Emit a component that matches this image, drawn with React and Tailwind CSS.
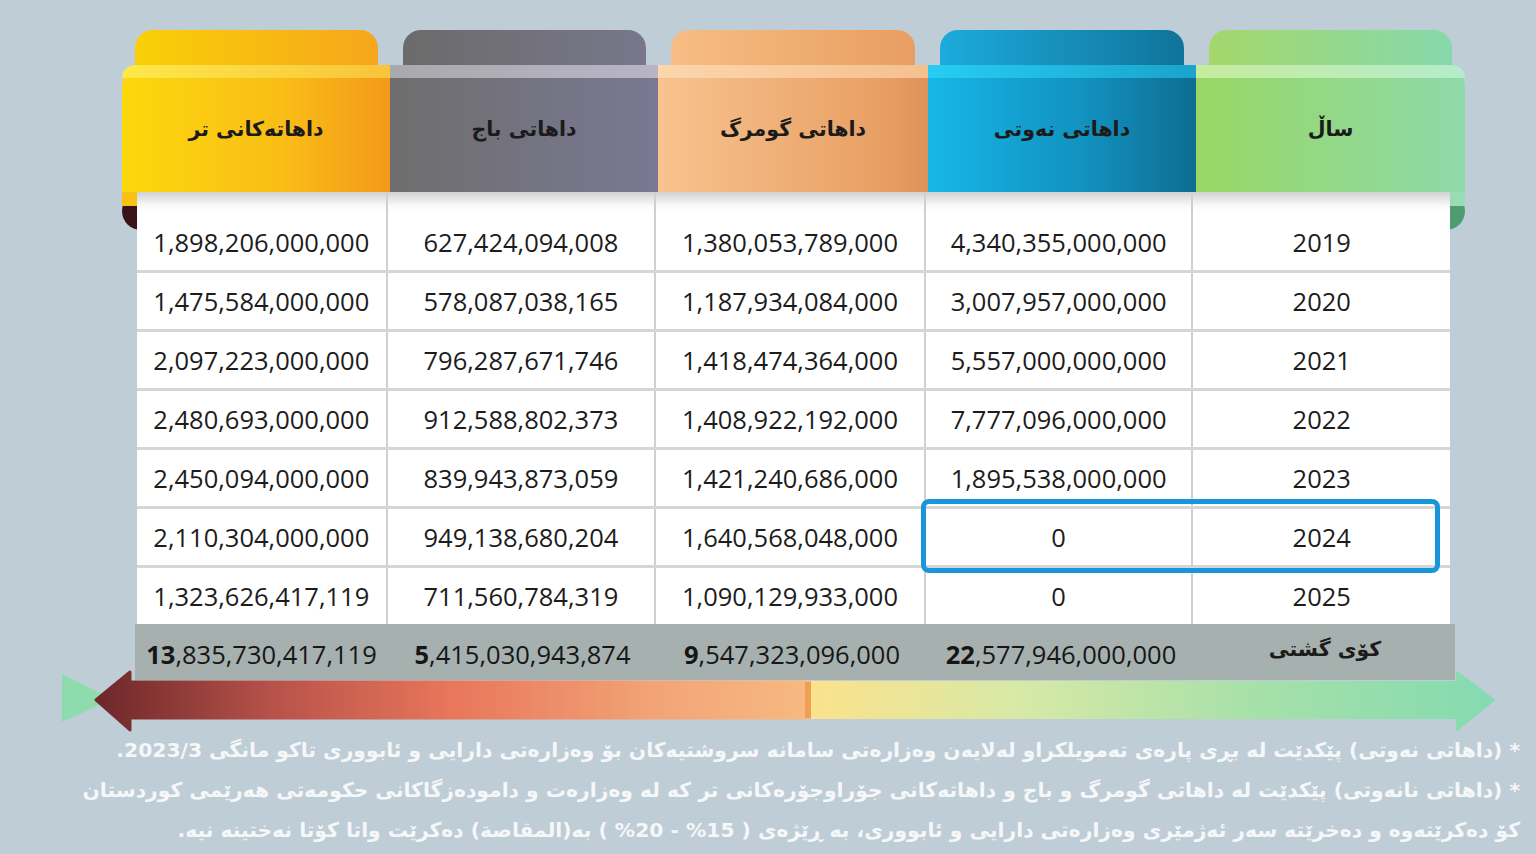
import React from "react";

const arabic = { fontFamily: '"DejaVu Sans", "Noto Sans", sans-serif' };
const nums = { fontFamily: '"Open Sans", "Noto Sans", sans-serif' };

// visual order, left to right
const tabs = [
  "w-[243px] bg-[linear-gradient(90deg,#f9d006,#f6a61d)]",
  "w-[243px] bg-[linear-gradient(90deg,#6b6b6b,#78778b)]",
  "w-[244px] bg-[linear-gradient(90deg,#f7bd85,#e89e60)]",
  "w-[244px] bg-[linear-gradient(90deg,#1cabdc,#10739a)]",
  "w-[243px] bg-[linear-gradient(90deg,#a4d76b,#86d9ab)]",
];

const heads = [
  {
    label: "داهاتەکانی تر",
    cls: "w-[268px] rounded-tl-[22px] bg-[linear-gradient(90deg,#fcd80c,#f9bd16_60%,#f49a1a)]",
    strip: "bg-[linear-gradient(90deg,#fde94a,#f9c43a)]",
  },
  {
    label: "داهاتی باج",
    cls: "w-[268px] bg-[linear-gradient(90deg,#6e6e6e,#7a7892)]",
    strip: "bg-[linear-gradient(90deg,#a9a9ad,#b7b5c6)]",
  },
  {
    label: "داهاتی گومرگ",
    cls: "w-[270px] bg-[linear-gradient(90deg,#f8c38f,#e89e63_85%,#df915a)]",
    strip: "bg-[linear-gradient(90deg,#fcd6ac,#f5c08f)]",
  },
  {
    label: "داهاتی نەوتی",
    cls: "w-[268px] bg-[linear-gradient(90deg,#16b7e8,#1290bd_60%,#0e6c92)]",
    strip: "bg-[linear-gradient(90deg,#27cdf2,#1aa3cc)]",
  },
  {
    label: "ساڵ",
    cls: "w-[269px] rounded-tr-[22px] bg-[linear-gradient(90deg,#98d764,#8ed9a9)]",
    strip: "bg-[linear-gradient(90deg,#c7ec9f,#b4eccb)]",
  },
];

const colW = ["w-[251px]", "w-[269px]", "w-[270px]", "w-[268px]", "w-[257px]"];

const rows = [
  ["1,898,206,000,000", "627,424,094,008", "1,380,053,789,000", "4,340,355,000,000", "2019"],
  ["1,475,584,000,000", "578,087,038,165", "1,187,934,084,000", "3,007,957,000,000", "2020"],
  ["2,097,223,000,000", "796,287,671,746", "1,418,474,364,000", "5,557,000,000,000", "2021"],
  ["2,480,693,000,000", "912,588,802,373", "1,408,922,192,000", "7,777,096,000,000", "2022"],
  ["2,450,094,000,000", "839,943,873,059", "1,421,240,686,000", "1,895,538,000,000", "2023"],
  ["2,110,304,000,000", "949,138,680,204", "1,640,568,048,000", "0", "2024"],
  ["1,323,626,417,119", "711,560,784,319", "1,090,129,933,000", "0", "2025"],
];

const totals = [
  ["13", ",835,730,417,119"],
  ["5", ",415,030,943,874"],
  ["9", ",547,323,096,000"],
  ["22", ",577,946,000,000"],
];
const totalW = ["w-[253px]", "w-[269px]", "w-[270px]", "w-[268px]", "w-[260px]"];

const notes = [
  "* (داهاتی نەوتی)  پێکدێت لە بڕی پارەی تەمویلکراو لەلایەن وەزارەتی سامانە سروشتیەکان بۆ وەزارەتی دارایی و ئابووری تاکو مانگی 2023/3.",
  "* (داهاتی نانەوتی)  پێکدێت لە داهاتی گومرگ و باج و داهاتەکانی جۆراوجۆرەکانی تر کە لە وەزارەت و دامودەزگاکانی حکومەتی هەرێمی کوردستان",
  "کۆ دەکرێتەوە و دەخرێتە سەر ئەژمێری وەزارەتی دارایی و ئابووری، بە ڕێژەی ( 15% - 20% ) بە(المقاصة) دەکرێت واتا کۆتا نەختینە نیە.",
];

function Arrow() {
  return (
    <svg width="1536" height="64" viewBox="0 668 1536 64" className="block -mt-[10px]">
      <defs>
        <linearGradient id="warm" x1="95" x2="810" y1="0" y2="0" gradientUnits="userSpaceOnUse">
          <stop offset="0" stopColor="#6c2729" />
          <stop offset="0.25" stopColor="#b8524a" />
          <stop offset="0.5" stopColor="#e8775b" />
          <stop offset="0.8" stopColor="#f3a679" />
          <stop offset="1" stopColor="#f7b981" />
        </linearGradient>
        <linearGradient id="cool" x1="812" x2="1495" y1="0" y2="0" gradientUnits="userSpaceOnUse">
          <stop offset="0" stopColor="#fbe28c" />
          <stop offset="0.3" stopColor="#d8e9a6" />
          <stop offset="0.65" stopColor="#a6e0a9" />
          <stop offset="1" stopColor="#84dbb1" />
        </linearGradient>
      </defs>
      <polygon points="62,672 112,697 62,720" fill="#8edcae" strokeLinejoin="round" />
      <polygon
        points="96,698 130,670 130,680 808,680 808,716 130,716 130,728"
        fill="url(#warm)"
        stroke="url(#warm)"
        strokeWidth="3"
        strokeLinejoin="round"
      />
      <rect x="805" y="680" width="7" height="36" fill="#f1a053" />
      <polygon
        points="812,680 1457,680 1457,670 1494,698 1457,728 1457,716 812,716"
        fill="url(#cool)"
        stroke="url(#cool)"
        strokeWidth="2"
        strokeLinejoin="round"
      />
    </svg>
  );
}

export default function App() {
  return (
    <div className="w-[1536px] h-[854px] overflow-hidden bg-[#bfcdd6]">
      {/* upper tabs */}
      <div className="flex gap-[25px] pt-[30px] pl-[135px]">
        {tabs.map((c, i) => (
          <div key={i} className={`h-[35px] rounded-t-[18px] ${c}`} />
        ))}
      </div>

      {/* header band */}
      <div className="flex ml-[122px] w-[1343px] h-[127px]">
        {heads.map((h, i) => (
          <div key={i} className={`relative flex flex-col ${h.cls}`}>
            <div className={`h-[13px] ${h.strip} ${i === 0 ? "rounded-tl-[22px]" : ""} ${i === 4 ? "rounded-tr-[22px]" : ""}`} />
            <div className="flex-1 flex items-center justify-center pb-[12px]">
              <span style={arabic} className="text-[20.5px] font-bold text-[#1b1b1b]" dir="rtl">
                {h.label}
              </span>
            </div>
          </div>
        ))}
      </div>

      {/* table body */}
      <div className="relative ml-[122px] w-[1343px]">
        <div className="absolute left-0 top-0 w-[30px] h-[38px] rounded-l-full bg-[#3a1118]" />
        <div className="absolute left-0 top-0 w-[16px] h-[14px] bg-[#f7c214]" />
        <div className="absolute right-0 top-0 w-[30px] h-[38px] rounded-r-full bg-[#4e9c6f]" />
        <div className="absolute right-0 top-0 w-[16px] h-[14px] bg-[#9adbb8]" />

        <div className="relative mx-[15px] bg-white shadow-[inset_0_16px_14px_-10px_rgba(0,0,0,0.22)]">
          {rows.map((r, ri) => (
            <div key={ri} className={`flex ${ri === 0 ? "" : "border-t-[3px] border-[#d5d7d7]"}`}>
              {r.map((v, ci) => (
                <div
                  key={ci}
                  style={nums}
                  className={`${colW[ci]} ${ri === 0 ? "h-[78px] pt-[22px] mt-0" : "h-[56px]"} flex items-center justify-center text-[25.5px] text-[#1c1c1c] ${
                    ci < 4 ? "border-r-2 border-[#cfd0d0]" : ""
                  }`}
                >
                  {v}
                </div>
              ))}
            </div>
          ))}
          <div className="absolute left-[784px] top-[307px] w-[519px] h-[74px] rounded-[8px] border-[5px] border-[#1996d9]" />
        </div>
      </div>

      {/* totals */}
      <div className="relative flex ml-[135px] w-[1320px] h-[56px] bg-[#a6b0ae]">
        {totals.map((t, i) => (
          <div
            key={i}
            style={nums}
            className={`${totalW[i]} flex items-center justify-center text-[25.5px] text-[#161616] pt-[4px]`}
          >
            <span className="font-bold">{t[0]}</span>
            {t[1]}
          </div>
        ))}
        <div className={`${totalW[4]} flex items-center justify-center pb-[6px]`}>
          <span style={arabic} className="text-[20.5px] font-bold text-[#1b1b1b]" dir="rtl">
            کۆی گشتی
          </span>
        </div>
      </div>

      <Arrow />

      {/* notes */}
      <div dir="rtl" style={arabic} className="-mt-[4px] pr-[16px] text-right text-[#f5f7f9] font-bold">
        {notes.map((n, i) => (
          <div key={i} className="h-[40px] leading-[40px] text-[20.3px] whitespace-nowrap">
            {n}
          </div>
        ))}
      </div>
    </div>
  );
}
